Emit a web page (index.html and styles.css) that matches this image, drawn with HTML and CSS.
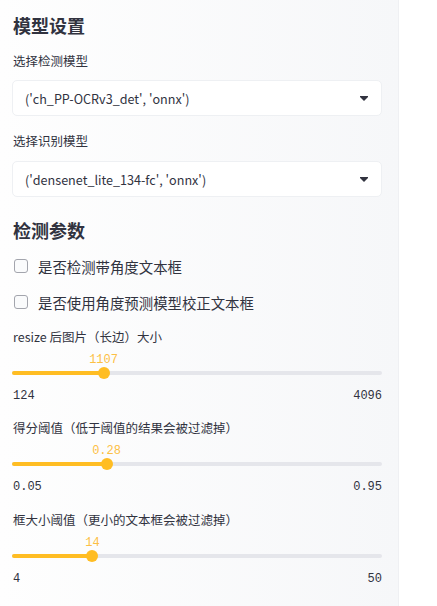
FILE: index.html
```html
<!DOCTYPE html>
<html lang="zh">
<head>
<meta charset="utf-8">
<link rel="stylesheet" href="styles.css">
</head>
<body>
<div class="page">
  <aside class="sidebar">
    <h2 class="heading first">模型设置</h2>
    <div class="label">选择检测模型</div>
    <div class="select">
      <span class="select-text">('ch_PP-OCRv3_det', 'onnx')</span>
      <svg class="caret" width="8" height="5" viewBox="0 0 8 5"><path d="M0 0H8V1L4 5L0 1Z" fill="#31333f"/></svg>
    </div>
    <div class="label second">选择识别模型</div>
    <div class="select">
      <span class="select-text">('densenet_lite_134-fc', 'onnx')</span>
      <svg class="caret" width="8" height="5" viewBox="0 0 8 5"><path d="M0 0H8V1L4 5L0 1Z" fill="#31333f"/></svg>
    </div>
    <h2 class="heading second-h">检测参数</h2>
    <label class="check c1"><span class="box"></span><span>是否检测带角度文本框</span></label>
    <label class="check c2"><span class="box"></span><span>是否使用角度预测模型校正文本框</span></label>

    <div class="slider s1">
      <div class="label">resize 后图片（长边）大小</div>
      <div class="value-row"><span class="value" style="left: 24.75%">1107</span></div>
      <div class="track"><div class="fill" style="width: 24.75%"></div><div class="thumb" style="left: 24.75%"></div></div>
      <div class="minmax"><span>124</span><span>4096</span></div>
    </div>

    <div class="slider s2">
      <div class="label">得分阈值（低于阈值的结果会被过滤掉）</div>
      <div class="value-row"><span class="value" style="left: 25.56%">0.28</span></div>
      <div class="track"><div class="fill" style="width: 25.56%"></div><div class="thumb" style="left: 25.56%"></div></div>
      <div class="minmax"><span>0.05</span><span>0.95</span></div>
    </div>

    <div class="slider s3">
      <div class="label">框大小阈值（更小的文本框会被过滤掉）</div>
      <div class="value-row"><span class="value" style="left: 21.74%">14</span></div>
      <div class="track"><div class="fill" style="width: 21.74%"></div><div class="thumb" style="left: 21.74%"></div></div>
      <div class="minmax"><span>4</span><span>50</span></div>
    </div>
  </aside>
  <main class="main"></main>
</div>
</body>
</html>
```
FILE: styles.css
```css
* { box-sizing: border-box; }
html, body { margin: 0; padding: 0; background: #ffffff; }
body {
  font-family: "Noto Sans CJK SC", "Noto Sans", sans-serif;
  color: #31333f;
}
.page { display: flex; width: 437px; height: 606px; overflow: hidden; }
.sidebar {
  width: 399px;
  height: 606px;
  flex: none;
  padding: 0 16px 0 12px;
  background: linear-gradient(to right, #fefefe, #f6f7f9);
  border-right: 1px solid #eff0f3;
  display: flex;
  flex-direction: column;
}
.main { flex: 1; background: #fff; }

.heading {
  margin: 0;
  font-size: 18px;
  font-weight: 700;
  line-height: 26px;
  height: 26px;
  padding-left: 1px;
}
.heading.first { margin-top: 12px; }
.heading.second-h { margin-top: 20px; }

.label {
  font-size: 12.5px;
  line-height: 20px;
  height: 20px;
  padding-left: 1px;
  white-space: nowrap;
}
.heading.first + .label { margin-top: 13px; }
.label.second { margin-top: 15px; }

.select {
  margin-top: 9px;
  height: 36px;
  width: 370px;
  background: #ffffff;
  border: 1px solid #eef0f3;
  border-radius: 5px;
  display: flex;
  align-items: center;
  justify-content: space-between;
  padding: 0 13px 0 12px;
}
.label.second + .select { margin-top: 10px; }
.select-text { font-size: 12.6px; white-space: nowrap; }
.caret { display: block; margin-top: 1px; }

.check {
  display: flex;
  align-items: center;
  gap: 10px;
  height: 20px;
  font-size: 14.4px;
  padding-left: 2px;
}
.check.c1 { margin-top: 13px; }
.check.c2 { margin-top: 16px; }
.box {
  width: 14px;
  height: 14px;
  border: 1px solid #a3a5ad;
  border-radius: 3px;
  background: #fafbfc;
  flex: none;
}

.slider { width: 370px; display: flex; flex-direction: column; }
.slider.s1 { margin-top: 15px; }
.slider.s2 { margin-top: 14px; }
.slider.s3 { margin-top: 15px; }
.value-row {
  position: relative;
  height: 16px;
  margin-top: 5px;
}
.value {
  position: absolute;
  top: 0;
  transform: translateX(-50%);
  font-family: "Liberation Mono", "DejaVu Sans Mono", monospace;
  font-size: 12px;
  line-height: 16px;
  color: #fcbf45;
}
.track {
  position: relative;
  height: 4px;
  margin: 3px 0 5px;
  background: #e5e6eb;
  border-radius: 2px;
}
.fill {
  height: 4px;
  background: #ffbd23;
  border-radius: 2px;
}
.thumb {
  position: absolute;
  top: -4px;
  width: 12px;
  height: 12px;
  margin-left: -6px;
  border-radius: 50%;
  background: #ffbd23;
}
.minmax {
  margin-top: 8px;
  height: 16px;
  display: flex;
  justify-content: space-between;
  font-family: "Liberation Mono", "DejaVu Sans Mono", monospace;
  font-size: 12px;
  line-height: 16px;
  padding-left: 1px;
}
```
